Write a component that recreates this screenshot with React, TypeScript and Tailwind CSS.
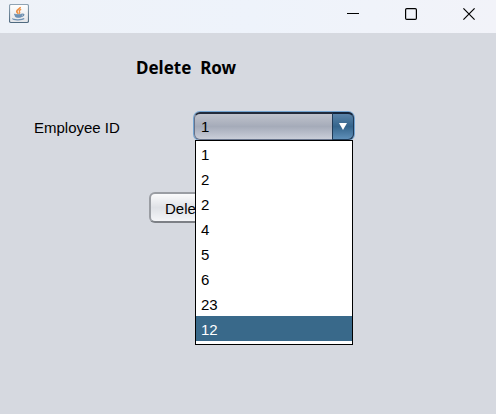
import { useState } from "react";

const employeeIds = ["1", "2", "2", "4", "5", "6", "23", "12"];

function JavaIcon() {
  return (
    <svg width="20" height="20" viewBox="0 0 20 20" aria-hidden="true">
      <defs>
        <linearGradient id="tile" x1="0" y1="0" x2="0" y2="1">
          <stop offset="0" stopColor="#ffffff" />
          <stop offset="1" stopColor="#e3e5e8" />
        </linearGradient>
        <linearGradient id="rim" x1="0" y1="0" x2="0" y2="1">
          <stop offset="0" stopColor="#8fa3b3" />
          <stop offset="1" stopColor="#4f6a80" />
        </linearGradient>
      </defs>
      <rect x="0.5" y="0.5" width="19" height="18" rx="1.5" fill="url(#tile)" stroke="url(#rim)" strokeWidth="1.2" />
      <path d="M11.2 3C11.6 5 7.8 5.4 7.8 7.4C7.8 8.6 9 9 9.2 9.8" fill="none" stroke="#ee9145" strokeWidth="1.8" />
      <path d="M12.2 5.4C10 6.2 10 7 10.6 7.8C11 8.4 10.6 9.2 10 9.7" fill="none" stroke="#ee9145" strokeWidth="1.3" />
      <path d="M5.4 10C7 10.8 11 10.8 13 10L12.4 13C10.8 13.6 8.2 13.6 6.6 13Z" fill="#6f93b5" stroke="#5f84a8" strokeWidth="0.6" />
      <path d="M13 10.2C15.6 9.4 15.6 12 12.8 12.4" fill="none" stroke="#5f84a8" strokeWidth="1.1" />
      <path d="M4 14.4C3 16.2 13 16.4 15.2 14.6" fill="none" stroke="#6f93b5" strokeWidth="1.3" />
    </svg>
  );
}

function TitleBar() {
  const button = "flex h-7 w-[54px] items-center justify-center hover:bg-black/5";
  return (
    <header className="flex h-[33px] items-start justify-between bg-gradient-to-r from-[#eef2f8] via-[#eef3fb] to-[#f2f3f9]">
      <div className="pt-1 pl-[9px]">
        <JavaIcon />
      </div>
      <div className="flex gap-1">
        <button type="button" aria-label="Minimize" className={button}>
          <svg width="12" height="12" viewBox="0 0 12 12">
            <path d="M0 5.5H12" stroke="#000" />
          </svg>
        </button>
        <button type="button" aria-label="Maximize" className={button}>
          <svg width="12" height="12" viewBox="0 0 12 12">
            <rect x="0.6" y="0.6" width="10.8" height="10.8" rx="1.2" fill="none" stroke="#000" strokeWidth="1.2" />
          </svg>
        </button>
        <button type="button" aria-label="Close" className={button}>
          <svg width="12" height="12" viewBox="0 0 12 12">
            <path d="M0.4 0.4L11.6 11.6M11.6 0.4L0.4 11.6" stroke="#000" strokeWidth="1.2" />
          </svg>
        </button>
      </div>
    </header>
  );
}

function EmployeeSelect() {
  const [selected, setSelected] = useState(0);
  const [active, setActive] = useState(7);
  const [open, setOpen] = useState(true);
  return (
    <div className="relative w-40">
      <div className="relative rounded-md shadow-[0_0_0_1px_#73a4d1]">
        <select
          id="employee-id"
          value={selected}
          onChange={(e) => setSelected(Number(e.target.value))}
          onMouseDown={(e) => {
            e.preventDefault();
            setOpen(!open);
          }}
          className="block h-7 w-full appearance-none rounded-md border border-t-2 border-[#66728a] border-t-[#222a3a] bg-gradient-to-b from-[#c0c3cc] via-[#a5abb9] to-[#caced9] pl-1.5 text-[15px] leading-6 text-black outline-none"
        >
          {employeeIds.map((id, i) => (
            <option key={i} value={i}>
              {id}
            </option>
          ))}
        </select>
        <div className="pointer-events-none absolute inset-y-0 right-0 flex w-[22px] items-center justify-center rounded-r-md border border-t-2 border-[#1f3a57] border-t-[#14243a] bg-gradient-to-b from-[#5a83a8] via-[#35658c] to-[#5f8fb8]">
          <svg width="8" height="8" viewBox="0 0 8 8" aria-hidden="true">
            <path d="M0 0H8L4 7Z" fill="#fff" />
          </svg>
        </div>
      </div>
      {open && (
        <ul
          role="listbox"
          aria-label="Employee ID"
          className="absolute inset-x-px top-7 z-10 border border-black bg-white pb-[3px]"
        >
          {employeeIds.map((id, i) => (
            <li
              key={i}
              role="option"
              aria-selected={i === active}
              onMouseEnter={() => setActive(i)}
              onClick={() => {
                setSelected(i);
                setOpen(false);
              }}
              className={
                i === active
                  ? "h-[25px] bg-[#39698a] pt-0.5 pl-[5px] text-white"
                  : "h-[25px] pt-0.5 pl-[5px] text-black"
              }
            >
              {id}
            </li>
          ))}
        </ul>
      )}
    </div>
  );
}

export default function App() {
  return (
    <div className="flex min-h-screen flex-col bg-[#d6d9e0] font-['Liberation_Sans',Arial,sans-serif] text-[15px] leading-6 text-black">
      <TitleBar />
      <main className="flex flex-col items-start">
        <h1 className="mt-[23px] ml-[136px] font-['Noto_Sans',sans-serif] text-[17px] leading-6 font-bold whitespace-pre">
          {"Delete  Row"}
        </h1>
        <form className="flex flex-col items-start" onSubmit={(e) => e.preventDefault()}>
          <div className="mt-8 flex items-center pl-[34px]">
            <label htmlFor="employee-id" className="w-40 pt-1">
              Employee ID
            </label>
            <EmployeeSelect />
          </div>
          <button
            type="submit"
            className="mt-[52px] ml-[149px] h-[31px] rounded-md border-2 border-[#9a9da3] border-b-[#7d8086] bg-gradient-to-b from-[#fbfbfc] via-[#dfe1e6] to-[#f4f5f8] px-3.5 pt-0.5"
          >
            Delete
          </button>
        </form>
      </main>
    </div>
  );
}
